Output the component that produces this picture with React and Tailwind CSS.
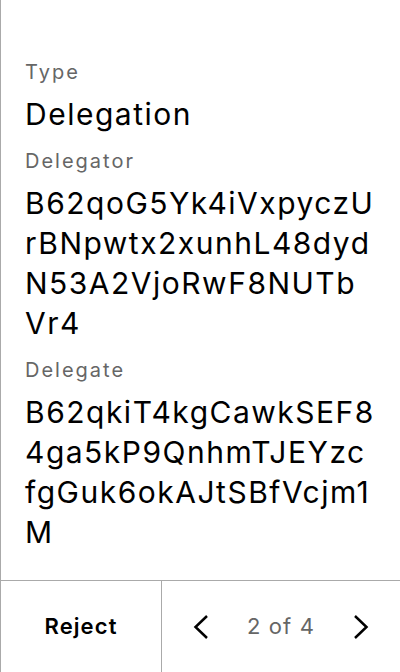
import React from "react";

function Field({ label, value }) {
  return (
    <div>
      <p className="text-[20px] leading-[28px] tracking-[0.1em] text-[#666666]">{label}</p>
      <p className="mt-[8px] text-[30px] leading-[40px] tracking-[0.05em] text-black break-all">{value}</p>
    </div>
  );
}

export default function App() {
  return (
    <div
      className="h-[672px] w-[400px] flex flex-col bg-white border-l border-[#aaaaaa]"
      style={{ fontFamily: "Inter, 'Noto Sans', sans-serif" }}
    >
      {/* Details */}
      <div className="flex-1 px-6 pt-[58px] flex flex-col gap-[13px]">
        <Field label="Type" value="Delegation" />
        <Field label="Delegator" value="B62qoG5Yk4iVxpyczUrBNpwtx2xunhL48dydN53A2VjoRwF8NUTbVr4" />
        <Field label="Delegate" value="B62qkiT4kgCawkSEF84ga5kP9QnhmTJEYzcfgGuk6okAJtSBfVcjm1M" />
      </div>

      {/* Footer */}
      <div className="h-[92px] flex border-t border-[#aaaaaa]">
        <button className="w-[160px] flex items-center justify-center text-[22px] font-semibold tracking-[0.05em] text-black">
          Reject
        </button>
        <div className="flex-1 flex items-center justify-between border-l border-[#aaaaaa] px-[31px]">
          <svg width="16" height="26" viewBox="0 0 16 26" fill="none" stroke="black" strokeWidth="2.5">
            <path d="M14 2 L2.5 13 L14 24" />
          </svg>
          <span className="text-[22px] tracking-[0.05em] text-[#666666]">2 of 4</span>
          <svg width="16" height="26" viewBox="0 0 16 26" fill="none" stroke="black" strokeWidth="2.5">
            <path d="M2 2 L13.5 13 L2 24" />
          </svg>
        </div>
      </div>
    </div>
  );
}
